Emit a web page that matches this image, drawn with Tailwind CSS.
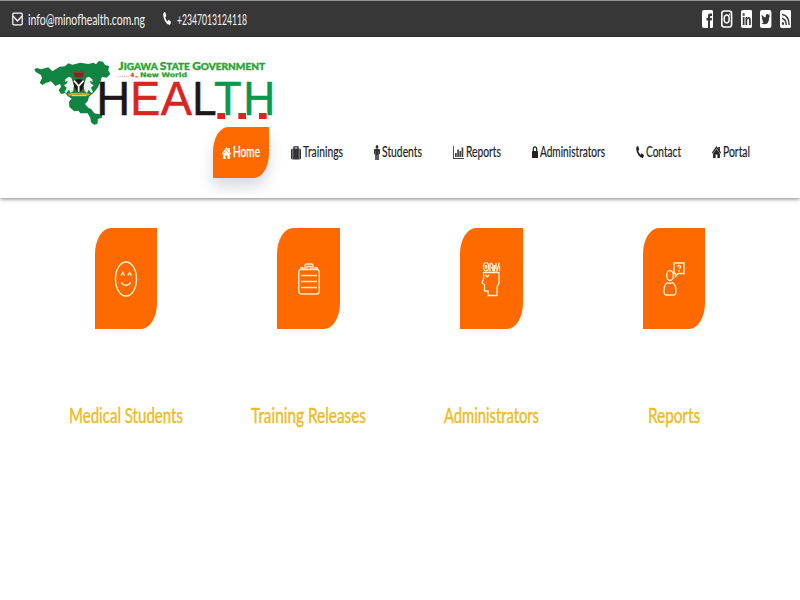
<!DOCTYPE html>
<html lang="en">
<head>
<meta charset="utf-8">
<title>Jigawa State Ministry of Health</title>
<script src="https://cdn.jsdelivr.net/npm/@tailwindcss/browser@4"></script>
</head>
<body class="w-[800px] h-[600px] overflow-hidden bg-white font-[Lato,sans-serif]">
<svg class="hidden">
  <symbol id="home" viewBox="0 0 20 20" preserveAspectRatio="none"><path d="M10 0 L14 4.500 V1.500 H17.500 V8 L20 11 L18.500 13 L10 3.800 L1.500 13 L0 11Z M10 5.200 L17.500 13 V20 H12 V14 H8 V20 H2.500 V13Z"/></symbol>
  <symbol id="phone" viewBox="0 0 20 20" preserveAspectRatio="none"><path d="M1 2 Q3 0 5.500 0 L8 6 L5.500 8.500 Q7.500 12.500 11.500 14.500 L14 12 L20 15 Q19.500 18 17.500 19.500 Q12 21 6 15 Q-1 8 1 2Z"/></symbol>
</svg>

<div class="h-[37px] border-t border-[#8f9391] bg-[#373737] flex items-center pl-3 pr-[9px] text-white">
  <svg class="w-[11px] h-[14px]" viewBox="0 0 11 14" fill="none" stroke="#fff" stroke-width="1.200"><rect x=".8" y="1.200" width="9.400" height="11.600" rx="1"/><path d="M1 4 L5.500 9 L10 4"/></svg>
  <svg class="ml-[5px] w-[117px] h-6 overflow-visible" fill="#f4f4f4"><text x="0" y="17.500" font-size="15" textLength="117" lengthAdjust="spacingAndGlyphs">info@minofhealth.com.ng</text></svg>
  <svg class="ml-[18px] mb-[2px] w-[8px] h-[13px]" fill="#fff"><use href="#phone"/></svg>
  <svg class="ml-[6px] w-[70px] h-6 overflow-visible" fill="#f4f4f4"><text x="0" y="17.500" font-size="15" textLength="70" lengthAdjust="spacingAndGlyphs">+2347013124118</text></svg>
  <div class="ml-auto flex gap-2">
    <svg class="w-[11.400px] h-[18px]" viewBox="0 0 11.400 18"><rect width="11.400" height="18" rx="2" fill="#fff"/><path d="M6 18 V10.500 H4.500 V8 H6 V6 Q6 3.500 8 3.500 H10 V6 H8.700 Q8 6 8 7 V8 H10 L9.700 10.500 H8 V18Z" fill="#373737"/></svg>
    <svg class="w-[11.400px] h-[18px]" viewBox="0 0 11.400 18" fill="none" stroke="#fff"><rect x=".8" y="1" width="9.800" height="16" rx="2.500" stroke-width="1.600"/><ellipse cx="5.700" cy="9" rx="2.500" ry="3.900" stroke-width="1.500"/><path d="M8 4.500 H9.300" stroke-width="1.800"/></svg>
    <svg class="w-[11.400px] h-[18px]" viewBox="0 0 11.400 18"><rect width="11.400" height="18" rx="2" fill="#fff"/><path d="M1.800 7 H3.500 V15 H1.800Z M1.700 3.300 H3.600 V5.700 H1.700Z M4.500 7 H6.100 V8 Q7 6.700 8.200 6.900 Q9.800 7.200 9.800 10 V15 H8.100 V10.500 Q8.100 8.700 7.200 8.700 Q6.200 8.700 6.200 10.500 V15 H4.500Z" fill="#373737"/></svg>
    <svg class="w-[11.400px] h-[18px]" viewBox="0 0 11.400 18"><rect width="11.400" height="18" rx="2" fill="#fff"/><path d="M1.700 4.600 Q3.400 7.500 5.600 7.500 Q5.400 4 7.500 4 Q8.300 4 8.700 4.800 L9.900 4.300 L9.200 6 L10 5.900 L9.100 7.400 Q9 14.300 4.300 14.300 Q2.700 14.300 1.500 13.200 Q2.900 13.200 3.800 12.300 Q2.700 12 2.300 10.400 H3 Q1.800 9.500 1.700 7.600 L2.400 7.900 Q1.300 6.500 1.700 4.600Z" fill="#373737"/></svg>
    <svg class="w-[11.400px] h-[18px]" viewBox="0 0 11.400 18"><rect width="11.400" height="18" rx="2" fill="#fff"/><g fill="none" stroke="#373737" stroke-width="1.400"><path d="M2 8.500 Q6 9 6.300 15 M2 4.500 Q8.700 5 9.200 15"/></g><ellipse cx="2.900" cy="13.500" rx="1.100" ry="1.600" fill="#373737"/></svg>
  </div>
</div>

<header class="h-[161px] bg-white shadow-[0_1px_4px_rgba(0,0,0,0.5)] pt-[13px]">
  <svg class="block ml-[25px] w-[250px] h-[77px]" viewBox="0 0 750 231">
    <path d="M28 58 L36 54 L48 58 L70 52 L82 64 L104 50 L120 49 L130 40 L142 44 L166 38 L190 42 L205 38 L213 43 L222 33 L234 35 L240 45 L252 48 L250 62 L256 72 L245 83 L231 80 L226 96 L218 113 L207 127 L192 140 L188 154 L180 162 L190 173 L199 178 L208 190 L232 194 L231 203 L219 207 L217 222 L207 224 L198 217 L196 204 L188 190 L166 190 L160 182 L148 184 L133 171 L132 155 L140 146 L128 138 L121 129 L108 132 L101 121 L108 110 L105 101 L91 108 L78 94 L64 98 L52 105 L44 98 L51 85 L48 75 L32 66Z" fill="#118441"/>
    <path d="M145 66 L151 63 L161 69 L171 63 L178 67 L174 82 L167 85 H155 L147 82Z" fill="#b3262b"/>
    <path d="M147 72 H176 M150 78 H173" stroke="#482a22" stroke-width="3"/>
    <path d="M145 91 Q161 84 178 91 Q180 118 161 128 Q143 118 145 91Z" fill="#171d1b"/>
    <path d="M147 92 L161 108 L176 92 M161 107 V126" fill="none" stroke="#fff" stroke-width="5"/>
    <path id="horse" d="M121 88 L131 80 L139 83 L143 94 L147 108 L144 124 L137 129 L132 119 L124 129 L119 126 L125 113 L117 106 L126 100 L128 92 L120 96Z" fill="#f0f4ee"/>
    <use href="#horse" transform="translate(323 0) scale(-1 1)"/>
    <path d="M127 131 Q161 125 196 131 L190 137 Q161 132 133 137Z" fill="#d6a52c"/>
    <path d="M140 137 H184" stroke="#e8e2c5" stroke-width="3"/>
    <g font-family="Lato, sans-serif" font-weight="900" fill="#2ba336">
      <text x="280" y="60" font-size="27" textLength="440" lengthAdjust="spacingAndGlyphs" stroke="#2ba336" stroke-width="1"><tspan font-size="34">J</tspan>IGAWA <tspan font-size="32">S</tspan>TATE <tspan font-size="32">G</tspan>OVERNMENT</text>
      <text x="345" y="80" font-family="DejaVu Sans" font-weight="bold" font-size="19" textLength="141" lengthAdjust="spacingAndGlyphs" stroke="#2ba336" stroke-width=".8">New World</text>
    </g>
    <g fill="#d9302c"><text x="279" y="80" font-family="Lato" font-size="17" textLength="34">......</text><text x="316" y="80" font-family="DejaVu Sans" font-weight="bold" font-size="18">4</text><path d="M331 79 H339 V82 H331Z"/></g>
    <g font-family="Liberation Sans, sans-serif" font-size="145" stroke-width="1.500">
      <text x="214" y="194" fill="#1b1718" stroke="#1b1718" textLength="102" lengthAdjust="spacingAndGlyphs">H</text>
      <text x="316" y="194" fill="#d9251f" stroke="#d9251f" textLength="90" lengthAdjust="spacingAndGlyphs">E</text>
      <text x="407" y="194" fill="#d9251f" stroke="#d9251f" textLength="94" lengthAdjust="spacingAndGlyphs">A</text>
      <text x="502" y="194" fill="#1b1718" stroke="#1b1718" textLength="73" lengthAdjust="spacingAndGlyphs">L</text>
      <text x="567" y="194" fill="#07994b" stroke="#07994b" textLength="83" lengthAdjust="spacingAndGlyphs">T</text>
      <text x="655" y="194" fill="#07994b" stroke="#07994b" textLength="96" lengthAdjust="spacingAndGlyphs">H</text>
    </g>
    <path d="M575 187 H602 V209 H575Z M638 187 H665 V209 H638Z M700 187 H727 V209 H700Z" fill="#fff"/>
    <path d="M577 189 H600 V207 H577Z M640 189 H663 V207 H640Z M702 189 H725 V207 H702Z" fill="#d9251f"/>
  </svg>

  <nav class="ml-[213px] flex items-center gap-[31px] text-[#222] text-[14.500px]">
    <a class="flex h-[51px] w-[56px] px-[9px] -mr-[9px] items-center gap-[2px] bg-[#ff6a00] text-white rounded-tl-[15px_25px] rounded-br-[15px_25px] shadow-[0_9px_14px_rgba(60,70,110,0.2)]">
      <svg class="shrink-0 w-[9px] h-[12px]" fill="currentColor"><use href="#home"/></svg>
      <svg class="shrink-0 w-[27px] h-5 overflow-visible" fill="currentColor"><text y="14" textLength="27" lengthAdjust="spacingAndGlyphs" stroke="currentColor" stroke-width=".3">Home</text></svg>
    </a>
    <a class="flex items-center gap-[2px]">
      <svg class="w-[10px] h-[14px]" viewBox="0 0 10 14"><path d="M3 3 V.800 H7 V3" fill="none" stroke="#333" stroke-width="1.300"/><path d="M0 4 Q0 2.500 1.700 2.500 V13.500 Q0 13.500 0 12Z M2.100 2.500 H7.900 V13.500 H2.100Z M8.300 2.500 Q10 2.500 10 4 V12 Q10 13.500 8.300 13.500Z" fill="#333"/></svg>
      <svg class="w-[40px] h-5 overflow-visible" fill="currentColor"><text y="14" textLength="40" lengthAdjust="spacingAndGlyphs" stroke="currentColor" stroke-width=".2">Trainings</text></svg>
    </a>
    <a class="flex items-center gap-[2px]">
      <svg class="mb-px w-[6px] h-[15px]" viewBox="0 0 6 15" fill="#333"><ellipse cx="3" cy="1.900" rx="1.400" ry="1.900"/><path d="M1 4 H5 Q6 4 6 5.200 V9.300 H5 V6 H4.800 V15 H3.200 V10 H2.800 V15 H1.200 V6 H1 V9.300 H0 V5.200 Q0 4 1 4Z"/></svg>
      <svg class="w-[40px] h-5 overflow-visible" fill="currentColor"><text y="14" textLength="40" lengthAdjust="spacingAndGlyphs" stroke="currentColor" stroke-width=".2">Students</text></svg>
    </a>
    <a class="flex items-center gap-[2px]">
      <svg class="mb-px w-[11px] h-[13px]" viewBox="0 0 11 13" fill="#444"><path d="M0 0 H.900 V12 H11 V13 H0Z M2 7 H3.700 V11 H2Z M4.200 3.500 H5.900 V11 H4.200Z M6.400 5 H8.100 V11 H6.400Z M8.600 1.500 H10.300 V11 H8.600Z"/></svg>
      <svg class="w-[35px] h-5 overflow-visible" fill="currentColor"><text y="14" textLength="35" lengthAdjust="spacingAndGlyphs" stroke="currentColor" stroke-width=".2">Reports</text></svg>
    </a>
    <a class="flex items-center gap-[2px]">
      <svg class="mb-[2px] w-[6px] h-[12px]" viewBox="0 0 6 12"><path d="M1.300 6 V3.500 Q1.300 .800 3 .800 Q4.700 .800 4.700 3.500 V6" fill="none" stroke="#222" stroke-width="1.200"/><rect y="5" width="6" height="7" rx=".6" fill="#222"/></svg>
      <svg class="w-[65px] h-5 overflow-visible" fill="currentColor"><text y="14" textLength="65" lengthAdjust="spacingAndGlyphs" stroke="currentColor" stroke-width=".2">Administrators</text></svg>
    </a>
    <a class="flex items-center gap-[2px]">
      <svg class="mb-[2px] w-[8px] h-[12px]" fill="#222"><use href="#phone"/></svg>
      <svg class="w-[35px] h-5 overflow-visible" fill="currentColor"><text y="14" textLength="35" lengthAdjust="spacingAndGlyphs" stroke="currentColor" stroke-width=".2">Contact</text></svg>
    </a>
    <a class="flex items-center gap-[2px]">
      <svg class="mb-px w-[9px] h-[12px]" fill="#222"><use href="#home"/></svg>
      <svg class="w-[27px] h-5 overflow-visible" fill="currentColor"><text y="14" textLength="27" lengthAdjust="spacingAndGlyphs" stroke="currentColor" stroke-width=".2">Portal</text></svg>
    </a>
  </nav>
</header>

<main class="ml-[34.500px] w-[731px] pt-[30px] grid grid-cols-4">
  <section class="flex flex-col items-center">
    <div class="w-[62.500px] h-[101px] bg-[#ff6a00] rounded-tl-[16px_26px] rounded-br-[16px_26px] flex items-center justify-center">
      <svg class="w-[24px] h-[36px]" viewBox="0 0 24 36" fill="none" stroke="#fff0d2" stroke-width="1.400"><ellipse cx="12" cy="18" rx="10.500" ry="17"/><path d="M7 14.500 L8.700 11.700 L10.400 14.500 M14 14.500 L15.700 11.700 L17.400 14.500 M7.200 21.500 Q12 27.500 16.800 21.500"/></svg>
    </div>
    <svg class="mt-[74px] w-[114px] h-7 overflow-visible" fill="#eebc22"><text y="20" font-size="20.500" textLength="114" lengthAdjust="spacingAndGlyphs" stroke="#eebc22" stroke-width=".4">Medical Students</text></svg>
  </section>
  <section class="flex flex-col items-center">
    <div class="w-[62.500px] h-[101px] bg-[#ff6a00] rounded-tl-[16px_26px] rounded-br-[16px_26px] flex items-center justify-center">
      <svg class="w-[22px] h-[32px]" viewBox="0 0 22 32" fill="none" stroke="#ffe8c4" stroke-width="1.400"><rect x=".8" y="6.500" width="20.400" height="24.500" rx="2.500"/><path d="M7 6 V3 Q7 1 9 1 H13 Q15 1 15 3 V6 M9 6 V3.500 H13 V6 M3 6 V4.700 H5 V6 M17 6 V4.700 H19 V6 M3 12.500 H19 M3 18.500 H19 M3 24.500 H19"/></svg>
    </div>
    <svg class="mt-[74px] w-[115px] h-7 overflow-visible" fill="#eebc22"><text y="20" font-size="20.500" textLength="115" lengthAdjust="spacingAndGlyphs" stroke="#eebc22" stroke-width=".4">Training Releases</text></svg>
  </section>
  <section class="flex flex-col items-center">
    <div class="w-[62.500px] h-[101px] bg-[#ff6a00] rounded-tl-[16px_26px] rounded-br-[16px_26px] flex items-center justify-center">
      <svg class="w-[20px] h-[36px]" viewBox="0 0 20 36" fill="none" stroke="#fff0d2" stroke-width="1.300"><path d="M2.500 11.500 H18 V22 Q17 24 16 26 V34.500 H7 V30 H3.500 V23.500 L1 22 L2.800 17.500Z M4.500 14 L6.200 16 L8 14"/><ellipse cx="5" cy="5.800" rx="2.600" ry="4.200"/><ellipse cx="5" cy="5.800" rx=".8" ry="1.500"/><path d="M9 10.500 V3 Q11 1 12 5 V10.500 M10.500 6 L13 10.500 M13.500 4 V10.500 M15 2 V8 M18.500 1.500 L15.500 10.500 M18.500 5 V10"/></svg>
    </div>
    <svg class="mt-[74px] w-[95px] h-7 overflow-visible" fill="#eebc22"><text y="20" font-size="20.500" textLength="95" lengthAdjust="spacingAndGlyphs" stroke="#eebc22" stroke-width=".4">Administrators</text></svg>
  </section>
  <section class="flex flex-col items-center">
    <div class="w-[62.500px] h-[101px] bg-[#ff6a00] rounded-tl-[16px_26px] rounded-br-[16px_26px] flex items-center justify-center">
      <svg class="w-[22px] h-[34px]" viewBox="0 0 22 34" fill="none" stroke="#fff0d2" stroke-width="1.400"><ellipse cx="7" cy="13.500" rx="3.300" ry="5"/><path d="M4.500 20.500 Q7 22 9.500 20.500 Q13 22.500 13 29.500 Q13 33 10.500 33 H3.500 Q1 33 1 29.500 Q1 22.500 4.500 20.500Z M11 1 H21 V11.500 H15 L12.500 14.500 V11.500 H11Z M14.500 4.500 Q16 2.300 17.500 4.500 Q17.500 6 16 7 M16 8.300 V9.800"/></svg>
    </div>
    <svg class="mt-[74px] w-[52px] h-7 overflow-visible" fill="#eebc22"><text y="20" font-size="20.500" textLength="52" lengthAdjust="spacingAndGlyphs" stroke="#eebc22" stroke-width=".4">Reports</text></svg>
  </section>
</main>
</body>
</html>
